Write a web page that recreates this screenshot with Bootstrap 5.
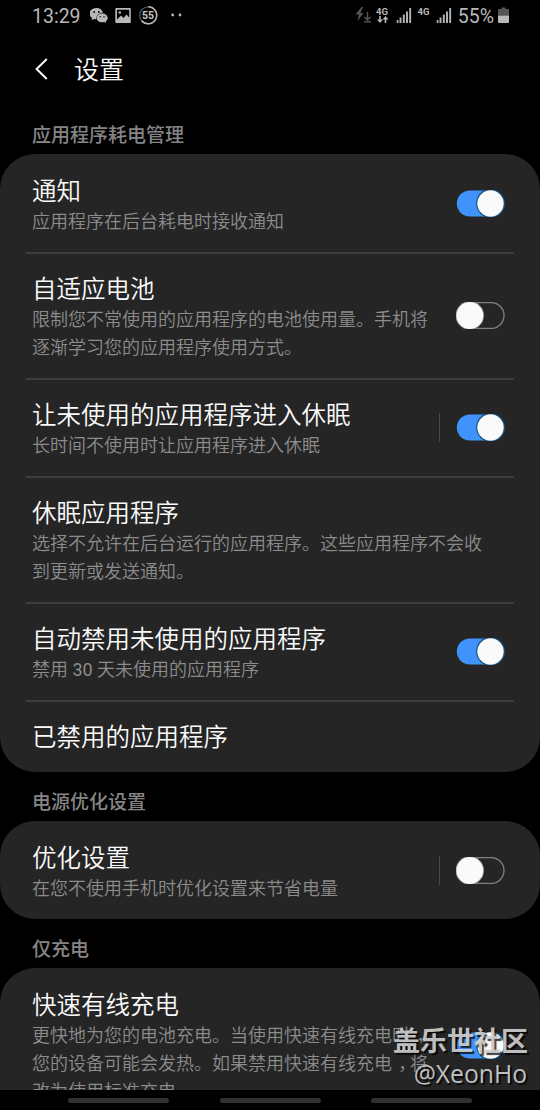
<!DOCTYPE html>
<html lang="zh-CN">
<head>
  <meta charset="UTF-8">
  <title>设置</title>
  <meta name="viewport" content="width=device-width, initial-scale=1">
  <link href="https://cdn.jsdelivr.net/npm/bootstrap@5.3.2/dist/css/bootstrap.min.css" rel="stylesheet">
  <style>
    body {
      background-color: #000;
      color: #fafafa;
      font-family: Roboto, "Noto Sans CJK SC", sans-serif;
    }
    .phone {
      width: 540px;
      height: 1110px;
    }
    .status-bar {
      height: 32px;
      padding: 0 31px 0 32px;
      color: #b8b8b8;
      font-size: 19.5px;
      line-height: 32px;
    }
    .status-bar span {
      padding-top: 2px;
      line-height: 30px;
    }
    .clock {
      width: 58px;
    }
    .title-bar {
      height: 76px;
      padding-left: 33px;
    }
    .title-bar h1 {
      font-size: 25px;
      font-weight: 350;
      line-height: 36px;
      margin-left: 23px;
      padding-top: 2px;
    }
    .section-label {
      height: 49px;
      padding: 17px 32px 0;
      color: #858585;
      font-size: 19px;
      font-weight: 500;
      line-height: 28px;
    }
    .first-label {
      height: 46px;
      padding-top: 14px;
    }
    .panel {
      background-color: #252525;
      border-radius: 35px;
    }
    .setting {
      margin: 0 26px;
      padding: 0 9px 0 6px;
    }
    .setting-text {
      padding: 21px 0 16px;
    }
    .setting + .setting {
      border-top: 2px solid #3d3d3d;
    }
    .setting + .setting .setting-text {
      padding-top: 19px;
    }
    .setting + .setting .switch-box {
      margin-bottom: 2px;
    }
    .setting:last-child .name-only {
      padding-bottom: 18px;
    }
    .setting-name {
      font-size: 24.5px;
      font-weight: 350;
      line-height: 33px;
    }
    .setting-note {
      color: #8c8c8c;
      font-size: 18px;
      font-weight: 350;
      line-height: 28px;
      white-space: nowrap;
    }
    .mid-comma {
      display: inline-block;
      width: 1em;
      text-indent: .35em;
    }
    .switch {
      width: 49px;
      height: 27px;
    }
    .switch-rule {
      width: 1px;
      height: 29px;
      margin-right: 16px;
      background-color: #484848;
    }
    .list-area {
      height: 1090px;
    }
    .nav-keys {
      height: 20px;
      padding: 8px 68px 0;
    }
    .nav-key {
      width: 101px;
      height: 5px;
      border-radius: 3px;
      background-color: #303030;
    }
    .stamp {
      right: 12px;
      top: 1024px;
      color: rgba(208, 208, 208, .93);
      text-shadow: 2px 2px 1px rgba(0, 0, 0, .75);
      text-align: right;
      white-space: nowrap;
    }
    .stamp-site {
      font-size: 27px;
      font-weight: 700;
      line-height: 36px;
    }
    .stamp-user {
      padding-right: 1px;
      font-family: "Open Sans", sans-serif;
      font-size: 24.7px;
      line-height: 28px;
    }
  </style>
</head>
<body>

<svg class="d-none">
  <symbol id="switch-on" viewBox="0 0 49 27">
    <rect x=".8" y=".5" width="47" height="26" rx="13" fill="#4093fa"/>
    <circle cx="34.5" cy="13.5" r="14.4" fill="#125185"/>
    <circle cx="34.5" cy="13.5" r="13.2" fill="#fafafa"/>
  </symbol>
  <symbol id="switch-off" viewBox="0 0 49 27">
    <rect x=".7" y=".5" width="47.3" height="26" rx="13" fill="none" stroke="#808080" stroke-width="1.3"/>
    <circle cx="13.8" cy="13.5" r="14.3" fill="#8a8a8a"/>
    <circle cx="13.8" cy="13.5" r="13.4" fill="#fafafa"/>
  </symbol>
  <symbol id="signal" viewBox="0 0 15 15">
    <path d="M1 12v3M4 9.500v5.500M7.300 6.500v8.500M10.500 3.500v11.500M13.700 0v15" stroke="#b8b8b8" stroke-width="1.900"/>
  </symbol>
</svg>

<div class="phone position-relative overflow-hidden">
  <div class="list-area overflow-hidden">
    <div class="status-bar d-flex align-items-center justify-content-between">
      <div class="d-flex align-items-center">
        <span class="clock">13:29</span>
        <svg width="152" height="32" viewBox="0 0 152 32">
          <g fill="#b8b8b8">
            <!-- WeChat -->
            <path d="M6.500 8C2.600 8-.5 10.400-.5 13.600c0 1.800 1 3.400 2.600 4.400l-.7 2.200 2.600-1.300c.8.200 1.600.3 2.400.3-.6-3.500 2.400-6.500 6.500-6.500C12.400 9.900 9.700 8 6.500 8z"/>
            <path d="M12.200 13.500c-3.200 0-5.500 2-5.500 4.400s2.400 4.400 5.500 4.400c.7 0 1.400-.1 2-.3l2.100 1.100-.6-1.800c1.200-.8 2-2 2-3.400 0-2.500-2.400-4.400-5.500-4.400z"/>
            <!-- picture -->
            <g transform="translate(1.300)">
              <path fill-rule="evenodd" d="M25 8h13.500q1 0 1 1v13q0 1-1 1H25q-1 0-1-1V9q0-1 1-1zm.700 1.700v9.800l4-4 2.500 2.500 3-3.500 2.700 3V9.700z"/>
              <circle cx="28.500" cy="12.500" r="1.300"/>
            </g>
            <circle cx="82.700" cy="15" r="1.400"/>
            <circle cx="90" cy="15" r="1.400"/>
          </g>
          <g fill="#000">
            <circle cx="4.200" cy="12" r=".9"/><circle cx="8.800" cy="12" r=".9"/>
            <circle cx="10.200" cy="16.700" r=".7"/><circle cx="14" cy="16.700" r=".7"/>
          </g>
          <circle cx="58.200" cy="15.300" r="8.500" fill="none" stroke="#555" stroke-width="1.200"/>
          <path d="M58.200 6.800a8.500 8.500 0 1 1-6.500 14" fill="none" stroke="#b8b8b8" stroke-width="1.500"/>
          <text x="58" y="19.300" text-anchor="middle" font-size="10.500" font-weight="700" fill="#c8c8c8">55</text>
        </svg>
      </div>
      <div class="d-flex align-items-center">
        <svg width="103" height="32" viewBox="0 0 103 32">
          <!-- power saving bolt and download arrow -->
          <path d="M6.500 7L.5 14.500H4L2.500 21l6-8H5.300L8 7z" fill="#555"/>
          <path d="M12.500 12v8M9.500 17l3 3 3-3M9 21.800h7" fill="none" stroke="#555" stroke-width="1.500"/>
          <g fill="#b8b8b8" font-size="9.500" font-weight="700">
            <text x="21" y="14.500">4G</text>
            <text x="62.500" y="14.500">4G</text>
          </g>
          <path d="M25 16v5M30.500 23v-5" stroke="#b8b8b8" stroke-width="1.600"/>
          <path d="M22 19.500h6L25 23zM27.500 19.500h6l-3-3.500z" fill="#b8b8b8"/>
          <use href="#signal" x="41.500" y="8" width="15" height="15"/>
          <use href="#signal" x="81.500" y="8" width="15" height="15"/>
        </svg>
        <span>55%</span>
        <svg class="ms-1" width="11" height="32" viewBox="0 0 11 32">
          <path d="M3.500 7.500h4V9H10q1 0 1 1v5.500H0V10q0-1 1-1h2.500z" fill="#555"/>
          <path d="M0 15.500h11V22q0 1-1 1H1q-1 0-1-1z" fill="#b8b8b8"/>
        </svg>
      </div>
    </div>

    <div class="title-bar d-flex align-items-center">
      <svg width="18" height="24" viewBox="0 0 18 24">
        <path d="M13.800 1L3.600 11 13.800 21" fill="none" stroke="#fafafa" stroke-width="2"/>
      </svg>
      <h1 class="mb-0">设置</h1>
    </div>

    <div class="section-label first-label">应用程序耗电管理</div>
    <div class="panel">
      <div class="setting d-flex align-items-center justify-content-between">
        <div class="setting-text">
          <div class="setting-name">通知</div>
          <div class="setting-note">应用程序在后台耗电时接收通知</div>
        </div>
        <div class="switch-box d-flex align-items-center">
          <svg class="switch overflow-visible"><use href="#switch-on"/></svg>
        </div>
      </div>
      <div class="setting d-flex align-items-center justify-content-between">
        <div class="setting-text">
          <div class="setting-name">自适应电池</div>
          <div class="setting-note">限制您不常使用的应用程序的电池使用量。手机将<br>逐渐学习您的应用程序使用方式。</div>
        </div>
        <div class="switch-box d-flex align-items-center">
          <svg class="switch overflow-visible"><use href="#switch-off"/></svg>
        </div>
      </div>
      <div class="setting d-flex align-items-center justify-content-between">
        <div class="setting-text">
          <div class="setting-name">让未使用的应用程序进入休眠</div>
          <div class="setting-note">长时间不使用时让应用程序进入休眠</div>
        </div>
        <div class="switch-box d-flex align-items-center">
          <div class="switch-rule"></div>
          <svg class="switch overflow-visible"><use href="#switch-on"/></svg>
        </div>
      </div>
      <div class="setting">
        <div class="setting-text">
          <div class="setting-name">休眠应用程序</div>
          <div class="setting-note">选择不允许在后台运行的应用程序。这些应用程序不会收<br>到更新或发送通知。</div>
        </div>
      </div>
      <div class="setting d-flex align-items-center justify-content-between">
        <div class="setting-text">
          <div class="setting-name">自动禁用未使用的应用程序</div>
          <div class="setting-note">禁用 <span class="fw-normal">30</span> 天未使用的应用程序</div>
        </div>
        <div class="switch-box d-flex align-items-center">
          <svg class="switch overflow-visible"><use href="#switch-on"/></svg>
        </div>
      </div>
      <div class="setting">
        <div class="setting-text name-only">
          <div class="setting-name">已禁用的应用程序</div>
        </div>
      </div>
    </div>

    <div class="section-label">电源优化设置</div>
    <div class="panel">
      <div class="setting d-flex align-items-center justify-content-between">
        <div class="setting-text">
          <div class="setting-name">优化设置</div>
          <div class="setting-note">在您不使用手机时优化设置来节省电量</div>
        </div>
        <div class="switch-box d-flex align-items-center">
          <div class="switch-rule"></div>
          <svg class="switch overflow-visible"><use href="#switch-off"/></svg>
        </div>
      </div>
    </div>

    <div class="section-label">仅充电</div>
    <div class="panel">
      <div class="setting d-flex align-items-center justify-content-between">
        <div class="setting-text">
          <div class="setting-name">快速有线充电</div>
          <div class="setting-note">更快地为您的电池充电。当使用快速有线充电时<span class="mid-comma">，</span><br>您的设备可能会发热。如果禁用快速有线充电<span class="mid-comma">，</span>将<br>改为使用标准充电。</div>
        </div>
        <div class="switch-box d-flex align-items-center">
          <svg class="switch overflow-visible"><use href="#switch-on"/></svg>
        </div>
      </div>
    </div>
  </div>

  <div class="nav-keys d-flex justify-content-between bg-black">
    <div class="nav-key"></div>
    <div class="nav-key"></div>
    <div class="nav-key"></div>
  </div>

  <div class="stamp position-absolute">
    <div class="stamp-site">盖乐世社区</div>
    <div class="stamp-user">@XeonHo</div>
  </div>
</div>

<script src="https://cdn.jsdelivr.net/npm/bootstrap@5.3.2/dist/js/bootstrap.bundle.min.js"></script>
</body>
</html>
